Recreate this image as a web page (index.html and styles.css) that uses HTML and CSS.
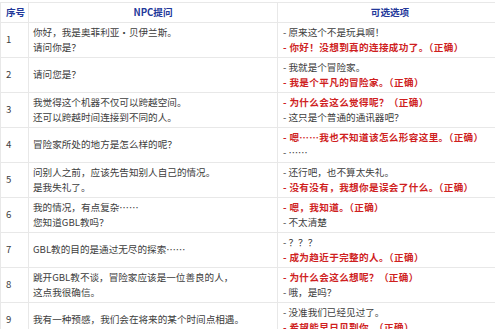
FILE: index.html
```html
<!DOCTYPE html>
<html lang="zh-CN">
<head>
<meta charset="utf-8">
<link rel="stylesheet" href="styles.css">
</head>
<body>
<div class="wrap">
<table class="qa">
  <colgroup>
    <col class="c-num">
    <col class="c-q">
    <col class="c-a">
  </colgroup>
  <thead>
    <tr class="head">
      <th class="h-num">序号</th>
      <th>NPC提问</th>
      <th>可选选项</th>
    </tr>
  </thead>
  <tbody>
    <tr>
      <td class="num">1</td>
      <td class="q">你好，我是奥菲利亚·贝伊兰斯。<br>请问你是？</td>
      <td class="a"><div class="opt">- 原来这个不是玩具啊！</div><div class="opt ok">- 你好！没想到真的连接成功了。（正确）</div></td>
    </tr>
    <tr>
      <td class="num">2</td>
      <td class="q">请问您是？</td>
      <td class="a"><div class="opt">- 我就是个冒险家。</div><div class="opt ok">- 我是个平凡的冒险家。（正确）</div></td>
    </tr>
    <tr>
      <td class="num">3</td>
      <td class="q">我觉得这个机器不仅可以跨越空间。<br>还可以跨越时间连接到不同的人。</td>
      <td class="a"><div class="opt ok">- 为什么会这么觉得呢？（正确）</div><div class="opt">- 这只是个普通的通讯器吧？</div></td>
    </tr>
    <tr>
      <td class="num">4</td>
      <td class="q">冒险家所处的地方是怎么样的呢？</td>
      <td class="a"><div class="opt ok">- 嗯……我也不知道该怎么形容这里。（正确）</div><div class="opt">- ……</div></td>
    </tr>
    <tr>
      <td class="num">5</td>
      <td class="q">问别人之前，应该先告知别人自己的情况。<br>是我失礼了。</td>
      <td class="a"><div class="opt">- 还行吧，也不算太失礼。</div><div class="opt ok">- 没有没有，我想你是误会了什么。（正确）</div></td>
    </tr>
    <tr>
      <td class="num">6</td>
      <td class="q">我的情况，有点复杂……<br>您知道GBL教吗？</td>
      <td class="a"><div class="opt ok">- 嗯，我知道。（正确）</div><div class="opt">- 不太清楚</div></td>
    </tr>
    <tr>
      <td class="num">7</td>
      <td class="q">GBL教的目的是通过无尽的探索……</td>
      <td class="a"><div class="opt">- ？？？</div><div class="opt ok">- 成为趋近于完整的人。（正确）</div></td>
    </tr>
    <tr>
      <td class="num">8</td>
      <td class="q">跳开GBL教不谈，冒险家应该是一位善良的人，<br>这点我很确信。</td>
      <td class="a"><div class="opt ok">- 为什么会这么想呢？（正确）</div><div class="opt">- 哦，是吗？</div></td>
    </tr>
    <tr>
      <td class="num">9</td>
      <td class="q">我有一种预感，我们会在将来的某个时间点相遇。</td>
      <td class="a"><div class="opt">- 没准我们已经见过了。</div><div class="opt ok">- 希望能早日见到你。（正确）</div></td>
    </tr>
  </tbody>
</table>
</div>
</body>
</html>
```
FILE: styles.css
```css
html, body {
  margin: 0;
  padding: 0;
  background: #ffffff;
  overflow: hidden;
}

.wrap {
  padding-top: 2px;
  width: 495px;
  overflow: hidden;
}

.qa {
  border-collapse: collapse;
  table-layout: fixed;
  width: 502px;
  font-family: "Noto Sans CJK SC", "Noto Sans", sans-serif;
  font-size: 9.6px;
  line-height: 14.5px;
  color: #3d3d3d;
}

.c-num { width: 28px; }
.c-q { width: 249px; }
.c-a { width: 225px; }

.qa th,
.qa td {
  border: 1px solid #e8e8e8;
  vertical-align: middle;
  text-align: left;
  padding: 2.5px 4px;
  white-space: nowrap;
}

.qa th {
  height: 14px;
  padding: 2px 4px;
  color: #23389a;
  font-weight: bold;
  text-align: center;
}

.qa th.h-num {
  text-align: left;
  padding-left: 5px;
}

.qa td.num {
  padding-left: 5px;
}

.qa td.q {
  padding-left: 4px;
}

.qa td.a {
  padding-left: 5px;
}

.opt.ok {
  color: #cf1f1f;
  font-weight: bold;
  letter-spacing: 0.35px;
}
```
